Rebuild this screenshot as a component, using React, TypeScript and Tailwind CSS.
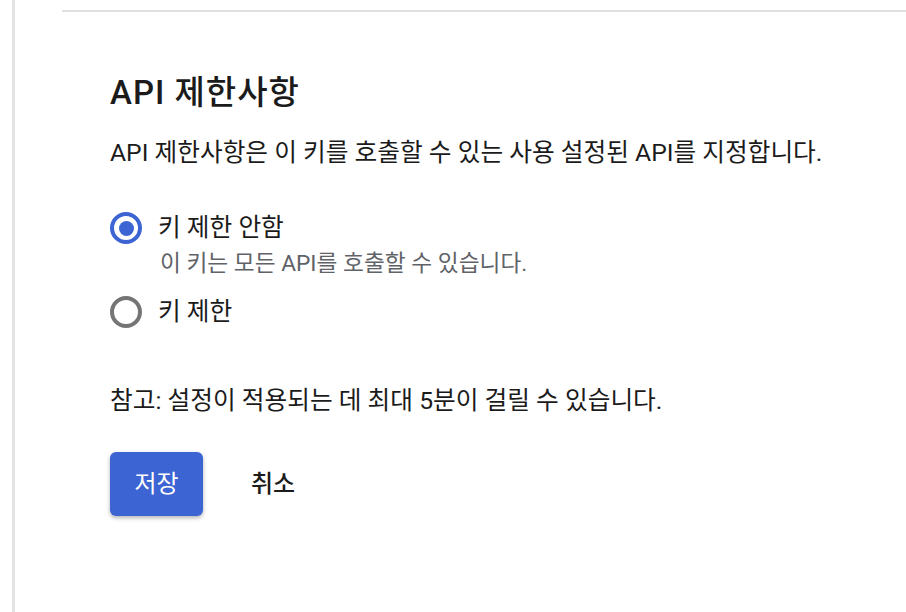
import { useState } from "react";

const Radio = ({ checked }: { checked: boolean }) => (
  <span
    className={`flex h-[32px] w-[32px] shrink-0 items-center justify-center rounded-full border-[4px] ${
      checked ? "border-[#3c64d2]" : "border-[#757575]"
    }`}
  >
    {checked && <span className="h-[15px] w-[15px] rounded-full bg-[#3c64d2]" />}
  </span>
);

const App = () => {
  const [restrict, setRestrict] = useState(false);

  return (
    <div
      className="flex h-[612px] w-[906px] overflow-hidden bg-white text-[#1b1b1b]"
      style={{ fontFamily: 'Roboto, "Noto Sans CJK KR", sans-serif' }}
    >
      <div className="ml-[12px] w-[3px] shrink-0 bg-[#e3e3e3]" />
      <div className="flex-1 pl-[47px]">
        <div className="mt-[10px] h-[2px] bg-[#e0e0e0]" />
        <div className="pl-[48px] pt-[63px]">
          <h2 className="text-[33px] font-medium leading-[36px] tracking-[1px]">API 제한사항</h2>
          <p className="mt-[26px] text-[24.7px] leading-[32px]">
            API 제한사항은 이 키를 호출할 수 있는 사용 설정된 API를 지정합니다.
          </p>

          <div className="mt-[43px] flex flex-col">
            <button type="button" onClick={() => setRestrict(false)} className="flex items-center gap-[16px] text-left">
              <Radio checked={!restrict} />
              <span className="text-[24.7px] leading-[32px]">키 제한 안함</span>
            </button>
            <p className="ml-[50px] mt-[6px] text-[22.7px] leading-[28px] text-[#5f6368]">
              이 키는 모든 API를 호출할 수 있습니다.
            </p>
            <button type="button" onClick={() => setRestrict(true)} className="mt-[18px] flex items-center gap-[16px] text-left">
              <Radio checked={restrict} />
              <span className="text-[24.7px] leading-[32px]">키 제한</span>
            </button>
          </div>

          <p className="mt-[57px] text-[24.7px] leading-[32px]">참고: 설정이 적용되는 데 최대 5분이 걸릴 수 있습니다.</p>

          <div className="mt-[35px] flex items-center gap-[48px]">
            <button
              type="button"
              className="h-[64px] w-[93px] rounded-[6px] bg-[#3c64d2] text-[24px] text-white shadow-[0_2px_4px_rgba(0,0,0,0.3)]"
            >
              저장
            </button>
            <button type="button" className="text-[24px] font-medium">
              취소
            </button>
          </div>
        </div>
      </div>
    </div>
  );
};

export default App;
